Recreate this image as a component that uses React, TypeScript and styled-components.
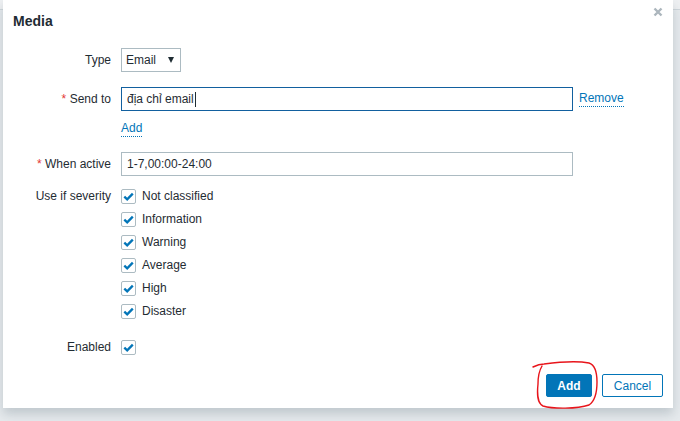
import React from "react";
import styled, { createGlobalStyle } from "styled-components";

const GlobalStyle = createGlobalStyle`
  html, body {
    margin: 0;
    padding: 0;
    width: 680px;
    height: 421px;
    overflow: hidden;
    background: #e4e8eb;
    font-family: "Liberation Sans", Arial, sans-serif;
    font-size: 12px;
    color: #1f2c33;
  }
`;

const severities = [
  "Not classified",
  "Information",
  "Warning",
  "Average",
  "High",
  "Disaster",
];

const Page = styled.div`
  position: relative;
  width: 680px;
  height: 421px;
  background: linear-gradient(to bottom, #eef0f2 0, #eef0f2 9px, #cfd6db 9px, #cfd6db 10px, #e6eaed 10px);
`;

const Dialog = styled.div`
  position: absolute;
  left: 3px;
  top: 0;
  width: 670px;
  height: 408px;
  box-sizing: border-box;
  background: #fff;
  box-shadow: 0 6px 10px rgba(60, 80, 95, 0.22);
  display: flex;
  flex-direction: column;
`;

const Header = styled.div`
  display: flex;
  justify-content: space-between;
  align-items: flex-start;
  padding: 13px 10px 0 10px;
  height: 35px;
  box-sizing: border-box;
`;

const Title = styled.h4`
  margin: 0;
  font-size: 14px;
  line-height: 16px;
  font-weight: bold;
  color: #1f2c33;
`;

const Close = styled.button`
  border: 0;
  background: none;
  padding: 0;
  margin: -6px 0 0 0;
  width: 10px;
  height: 10px;
  display: flex;
  cursor: pointer;
`;

const Form = styled.div`
  display: flex;
  flex-direction: column;
  padding: 13px 10px 0 10px;
`;

const Row = styled.div<{ $gap: number; $top?: boolean }>`
  display: grid;
  grid-template-columns: 98px 1fr;
  column-gap: 10px;
  align-items: ${(p) => (p.$top ? "start" : "center")};
  margin-bottom: ${(p) => p.$gap}px;
`;

const Label = styled.label<{ $required?: boolean }>`
  text-align: right;
  line-height: 16px;
  white-space: nowrap;
  &::before {
    content: ${(p) => (p.$required ? '"* "' : '""')};
    color: #e33734;
  }
`;

const Controls = styled.div`
  display: flex;
  align-items: center;
  gap: 6px;
`;

const Select = styled.div`
  display: flex;
  align-items: center;
  gap: 12px;
  height: 24px;
  box-sizing: border-box;
  padding: 0 6px 0 4px;
  border: 1px solid #acbbc2;
  background: #fff;
  line-height: 16px;
  &::after {
    content: "";
    border-left: 3.5px solid transparent;
    border-right: 3.5px solid transparent;
    border-top: 6px solid #1f2c33;
  }
`;

const TextBox = styled.div<{ $focused?: boolean }>`
  display: flex;
  align-items: center;
  width: 452px;
  height: 24px;
  box-sizing: border-box;
  padding: 0 5px;
  border: 1px solid ${(p) => (p.$focused ? "#12609f" : "#acbbc2")};
  background: #fff;
  line-height: 16px;
`;

const Caret = styled.span`
  display: inline-block;
  width: 1px;
  height: 15px;
  margin-left: 1px;
  background: #1f2c33;
`;

const Link = styled.a`
  color: #0275b8;
  text-decoration: none;
  border-bottom: 1px dotted #0275b8;
  line-height: 15px;
  cursor: pointer;
`;

const CheckList = styled.ul`
  list-style: none;
  margin: 1px 0 0 0;
  padding: 0;
  display: flex;
  flex-direction: column;
  gap: 8px;
`;

const CheckItem = styled.li`
  display: flex;
  align-items: center;
  gap: 6px;
  height: 15px;
  line-height: 15px;
`;

const Box = styled.span`
  width: 15px;
  height: 15px;
  box-sizing: border-box;
  border: 1px solid #acbbc2;
  border-radius: 2px;
  background: #fff;
  display: flex;
  align-items: center;
  justify-content: center;
`;

const Footer = styled.div`
  margin-top: auto;
  display: flex;
  justify-content: flex-end;
  gap: 10px;
  padding: 0 10px 11px 0;
  position: relative;
`;

const Button = styled.button<{ $primary?: boolean }>`
  height: 23px;
  box-sizing: border-box;
  padding: 0 10px;
  font-family: "Liberation Sans", Arial, sans-serif;
  font-size: 12px;
  border-radius: 2px;
  border: 1px solid #0275b8;
  background: ${(p) => (p.$primary ? "#0275b8" : "#fff")};
  color: ${(p) => (p.$primary ? "#fff" : "#0275b8")};
  font-weight: ${(p) => (p.$primary ? "bold" : "normal")};
  min-width: ${(p) => (p.$primary ? 46 : 61)}px;
  cursor: pointer;
`;

const Scribble = styled.svg`
  position: absolute;
  right: 72px;
  bottom: -2px;
  width: 70px;
  height: 50px;
  pointer-events: none;
`;

const Check = () => (
  <svg width="11" height="9" viewBox="0 0 11 9">
    <path d="M1.3 4.6 L4.2 7.3 L9.8 1.6" fill="none" stroke="#0275b8" strokeWidth="2.3" />
  </svg>
);

const Checkbox: React.FC = () => (
  <Box>
    <Check />
  </Box>
);

const App: React.FC = () => {
  return (
    <Page>
      <GlobalStyle />
      <Dialog>
        <Header>
          <Title>Media</Title>
          <Close aria-label="Close">
            <svg width="10" height="10" viewBox="0 0 10 10">
              <path d="M1.5 1.5 L8.5 8.5 M8.5 1.5 L1.5 8.5" stroke="#acb6bd" strokeWidth="2.4" />
            </svg>
          </Close>
        </Header>
        <Form>
          <Row $gap={15}>
            <Label>Type</Label>
            <Controls>
              <Select>Email</Select>
            </Controls>
          </Row>
          <Row $gap={10}>
            <Label $required>Send to</Label>
            <Controls>
              <TextBox $focused>
                địa chỉ email
                <Caret />
              </TextBox>
              <Link>Remove</Link>
            </Controls>
          </Row>
          <Row $gap={15}>
            <span />
            <Controls>
              <Link>Add</Link>
            </Controls>
          </Row>
          <Row $gap={12}>
            <Label $required>When active</Label>
            <Controls>
              <TextBox>1-7,00:00-24:00</TextBox>
            </Controls>
          </Row>
          <Row $gap={20} $top>
            <Label>Use if severity</Label>
            <CheckList>
              {severities.map((s) => (
                <CheckItem key={s}>
                  <Checkbox />
                  {s}
                </CheckItem>
              ))}
            </CheckList>
          </Row>
          <Row $gap={0}>
            <Label>Enabled</Label>
            <Controls>
              <Checkbox />
            </Controls>
          </Row>
        </Form>
        <Footer>
          <Button $primary>Add</Button>
          <Button>Cancel</Button>
          <Scribble viewBox="0 0 70 50">
            <path
              d="M2 7 C6 5, 9 4, 13 4 C28 2, 48 1, 58 3 C64 5, 66 12, 66 22 C66 32, 64 41, 58 45 C46 49, 22 49, 12 46 C6 43, 6 34, 7 24 C7 17, 8 11, 11 6"
              fill="none"
              stroke="#e8151b"
              strokeWidth="1.4"
              strokeLinecap="round"
            />
          </Scribble>
        </Footer>
      </Dialog>
    </Page>
  );
};

export default App;
